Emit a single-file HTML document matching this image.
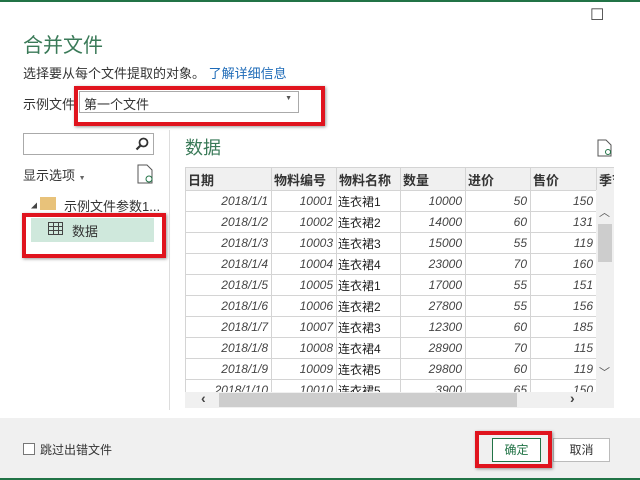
<!DOCTYPE html>
<html><head><meta charset="utf-8"><style>
*{margin:0;padding:0;box-sizing:border-box}
body{width:640px;height:480px;overflow:hidden;background:#fff;font-family:"Liberation Sans","Noto Sans CJK SC",sans-serif;position:relative;color:#333}
.a{position:absolute}
.red{position:absolute;border:4px solid #e0141e;box-shadow:1px 1px 3px rgba(0,0,0,.4)}
table{border-collapse:collapse;font-size:12px}
td{border:1px solid #d4d4d4;height:21px;padding:0 3px;text-align:right;font-style:italic;color:#444;white-space:nowrap;overflow:hidden}
th{border:1px solid #d4d4d4;height:23px;background:#f0f0f0;text-align:left;font-weight:bold;padding:0 2px;font-size:13px}
td.n{text-align:left;font-style:normal;font-size:12px;color:#222;padding:0 1px}
</style></head><body>
<div class="a" style="left:0;top:0;width:640px;height:2px;background:#217346"></div>
<div class="a" style="left:590px;top:5px;font-size:16px;color:#444">☐</div>
<div class="a" style="left:23px;top:29px;font-size:20px;color:#3a7a58">合并文件</div>
<div class="a" style="left:23px;top:63px;font-size:13px">选择要从每个文件提取的对象。 <span style="color:#1e6bb8">了解详细信息</span></div>
<div class="a" style="left:23px;top:94px;font-size:13px">示例文件:</div>
<div class="a" style="left:79px;top:91px;width:220px;height:22px;border:1px solid #aaa;font-size:13px;padding:2px 4px;background:#fff">第一个文件<span style="position:absolute;right:6px;top:3px;font-size:7px;color:#555">▼</span></div>
<div class="red" style="left:74px;top:86px;width:251px;height:40px"></div>
<div class="a" style="left:23px;top:133px;width:131px;height:22px;border:1px solid #aaa"><svg class="a" style="right:4px;top:3px" width="14" height="14"><circle cx="8.5" cy="5.5" r="4" fill="none" stroke="#333" stroke-width="1.8"/><line x1="5.5" y1="8.5" x2="1.5" y2="12.5" stroke="#333" stroke-width="2.2"/></svg></div>
<div class="a" style="left:23px;top:165px;font-size:13px">显示选项 <span style="font-size:7px;color:#666">▼</span></div>
<svg class="a" style="left:137px;top:164px" width="18" height="20"><path d="M1 1h9l5 5v13H1z" fill="none" stroke="#555"/><circle cx="12" cy="15" r="3" fill="none" stroke="#217346"/></svg>
<div class="a" style="left:31px;top:201px;font-size:6px;color:#444">◢</div>
<div class="a" style="left:40px;top:197px;width:16px;height:13px;background:#e8c27a"></div>
<div class="a" style="left:64px;top:196px;font-size:13px">示例文件参数1...</div>
<div class="a" style="left:31px;top:218px;width:123px;height:24px;background:#cfe8dc"></div>
<svg class="a" style="left:48px;top:222px" width="16" height="14"><rect x="0.5" y="0.5" width="14" height="12" fill="none" stroke="#444"/><path d="M0 4.5h15M0 8.5h15M5.5 0v13M10.5 0v13" stroke="#444"/></svg>
<div class="a" style="left:72px;top:221px;font-size:13px">数据</div>
<div class="red" style="left:22px;top:213px;width:144px;height:45px"></div>
<div class="a" style="left:169px;top:130px;width:1px;height:280px;background:#ddd"></div>
<div class="a" style="left:185px;top:134px;font-size:18px;color:#3a7a58">数据</div>
<svg class="a" style="left:597px;top:139px" width="16" height="18"><path d="M1 1h8l5 5v11H1z" fill="none" stroke="#555"/><circle cx="11" cy="13" r="2.5" fill="none" stroke="#217346"/></svg>
<div class="a" style="left:185px;top:167px;width:429px;height:225px;overflow:hidden">
<table style="width:445px;table-layout:fixed">
<colgroup><col style="width:86px"><col style="width:65px"><col style="width:64px"><col style="width:65px"><col style="width:65px"><col style="width:66px"><col style="width:34px"></colgroup>
<tr><th>日期</th><th>物料编号</th><th>物料名称</th><th>数量</th><th>进价</th><th>售价</th><th>季节</th></tr>
<tr><td>2018/1/1</td><td>10001</td><td class="n">连衣裙1</td><td>10000</td><td>50</td><td>150</td><td></td></tr>
<tr><td>2018/1/2</td><td>10002</td><td class="n">连衣裙2</td><td>14000</td><td>60</td><td>131</td><td></td></tr>
<tr><td>2018/1/3</td><td>10003</td><td class="n">连衣裙3</td><td>15000</td><td>55</td><td>119</td><td></td></tr>
<tr><td>2018/1/4</td><td>10004</td><td class="n">连衣裙4</td><td>23000</td><td>70</td><td>160</td><td></td></tr>
<tr><td>2018/1/5</td><td>10005</td><td class="n">连衣裙1</td><td>17000</td><td>55</td><td>151</td><td></td></tr>
<tr><td>2018/1/6</td><td>10006</td><td class="n">连衣裙2</td><td>27800</td><td>55</td><td>156</td><td></td></tr>
<tr><td>2018/1/7</td><td>10007</td><td class="n">连衣裙3</td><td>12300</td><td>60</td><td>185</td><td></td></tr>
<tr><td>2018/1/8</td><td>10008</td><td class="n">连衣裙4</td><td>28900</td><td>70</td><td>115</td><td></td></tr>
<tr><td>2018/1/9</td><td>10009</td><td class="n">连衣裙5</td><td>29800</td><td>60</td><td>119</td><td></td></tr>
<tr><td>2018/1/10</td><td>10010</td><td class="n">连衣裙5</td><td>3900</td><td>65</td><td>150</td><td></td></tr>
</table></div>
<div class="a" style="left:596px;top:190px;width:18px;height:202px;background:#f0f0f0"></div>
<div class="a" style="left:598px;top:224px;width:14px;height:38px;background:#cdcdcd"></div>
<div class="a" style="left:599px;top:204px;font-size:11px;color:#555">︿</div>
<div class="a" style="left:599px;top:364px;font-size:11px;color:#555">﹀</div>
<div class="a" style="left:185px;top:392px;width:429px;height:16px;background:#f0f0f0"></div>
<div class="a" style="left:219px;top:393px;width:298px;height:14px;background:#cdcdcd"></div>
<div class="a" style="left:201px;top:390px;font-size:14px;color:#444;font-weight:bold">‹</div>
<div class="a" style="left:570px;top:390px;font-size:14px;color:#444;font-weight:bold">›</div>
<div class="a" style="left:0;top:418px;width:640px;height:60px;background:#f0f0f0"></div>
<div class="a" style="left:0;top:478px;width:640px;height:2px;background:#217346"></div>
<div class="a" style="left:23px;top:443px;width:12px;height:12px;border:1px solid #777;background:#fff"></div>
<div class="a" style="left:40px;top:441px;font-size:12px">跳过出错文件</div>
<div class="a" style="left:492px;top:438px;width:49px;height:24px;border:1px solid #217346;background:#fff;font-size:12px;text-align:center;line-height:22px;color:#217346">确定</div>
<div class="a" style="left:553px;top:438px;width:57px;height:24px;border:1px solid #bbb;background:#fff;font-size:12px;text-align:center;line-height:22px">取消</div>
<div class="red" style="left:475px;top:431px;width:77px;height:37px"></div>
</body></html>
